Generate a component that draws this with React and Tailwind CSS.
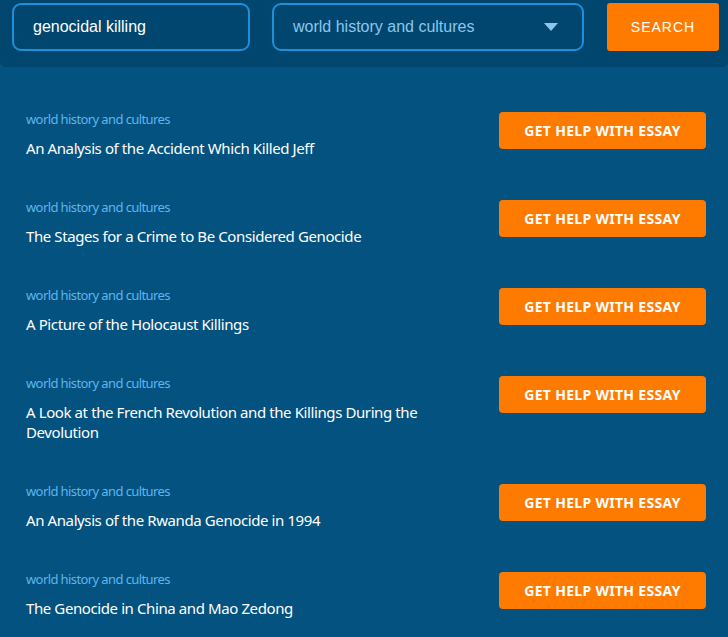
import React from "react";

const essays = [
  "An Analysis of the Accident Which Killed Jeff",
  "The Stages for a Crime to Be Considered Genocide",
  "A Picture of the Holocaust Killings",
  "A Look at the French Revolution and the Killings During the Devolution",
  "An Analysis of the Rwanda Genocide in 1994",
  "The Genocide in China and Mao Zedong",
];

export default function App() {
  return (
    <div className="w-[728px] h-[637px] overflow-hidden bg-[#04527f]">
      {/* Search bar */}
      <div className="flex items-start bg-[#01466e] rounded-b-md pt-[3px] pb-[16px] pl-[12px] pr-[9px] font-['Liberation_Sans',Arial,sans-serif]">
        <div className="w-[238px] h-[48px] border-2 border-[#1e8fd8] rounded-[9px] flex items-center px-[19px] text-white text-[16px]">
          genocidal killing
        </div>
        <div className="ml-[22px] w-[312px] h-[48px] border-2 border-[#1e8fd8] rounded-[9px] flex items-center justify-between pl-[19px] pr-[24px] text-[#8cc6ec] text-[16px]">
          <span>world history and cultures</span>
          <svg width="14" height="8" viewBox="0 0 14 8">
            <path d="M0 0 L14 0 L7 8 Z" fill="#8cc6ec" />
          </svg>
        </div>
        <button className="ml-auto w-[112px] h-[48px] bg-[#ff7b00] rounded-[3px] text-white text-[14px] tracking-[1px]">
          SEARCH
        </button>
      </div>

      {/* Results */}
      <div className="flex flex-col gap-[40px] pt-[43px] pl-[26px] pr-[22px] font-['Noto_Sans',sans-serif]">
        {essays.map((title) => (
          <div key={title} className="flex items-start justify-between">
            <div className="w-[420px]">
              <div className="text-[13px] leading-[18px] text-[#5db6ee] tracking-[-0.6px]">
                world history and cultures
              </div>
              <div className="mt-[10px] text-[15px] leading-[20px] text-white tracking-[-0.4px]">
                {title}
              </div>
            </div>
            <button className="mt-[2px] w-[207px] h-[37px] bg-[#ff7b00] rounded-[4px] text-white text-[14px] font-bold tracking-[0.3px]">
              GET HELP WITH ESSAY
            </button>
          </div>
        ))}
      </div>
    </div>
  );
}
